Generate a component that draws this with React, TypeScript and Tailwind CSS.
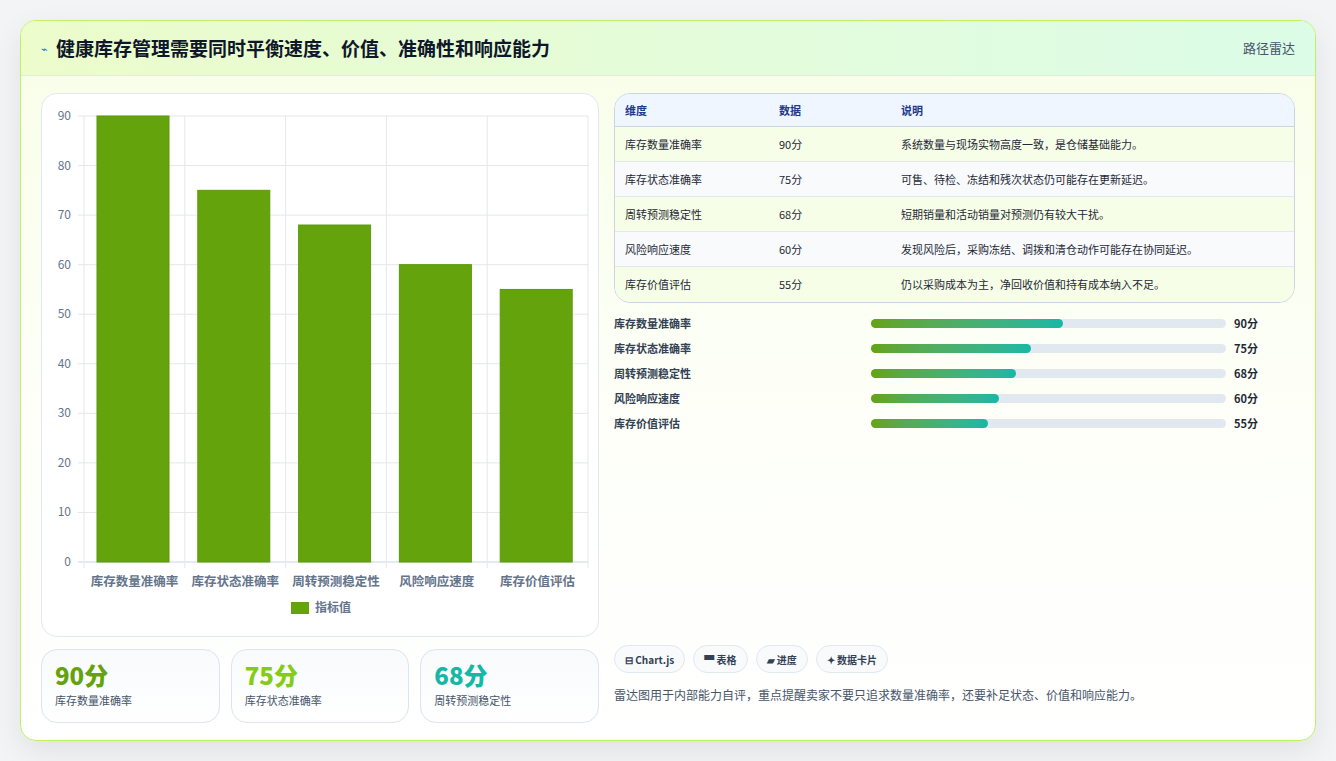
import React from "react";

const items = [
  { name: "库存数量准确率", value: 90, note: "系统数量与现场实物高度一致，是仓储基础能力。" },
  { name: "库存状态准确率", value: 75, note: "可售、待检、冻结和残次状态仍可能存在更新延迟。" },
  { name: "周转预测稳定性", value: 68, note: "短期销量和活动销量对预测仍有较大干扰。" },
  { name: "风险响应速度", value: 60, note: "发现风险后，采购冻结、调拨和清仓动作可能存在协同延迟。" },
  { name: "库存价值评估", value: 55, note: "仍以采购成本为主，净回收价值和持有成本纳入不足。" },
];

const font = { fontFamily: '"Noto Sans CJK SC", "Noto Sans", sans-serif' };

function BarChart() {
  const left = 42;
  const right = 546;
  const top = 22;
  const bottom = 468;
  const unit = (bottom - top) / 90;
  const cw = (right - left) / 5;
  return (
    <svg width="558" height="543" className="block" style={font}>
      {[0, 10, 20, 30, 40, 50, 60, 70, 80, 90].map((v) => {
        const y = bottom - v * unit;
        return (
          <g key={v}>
            <line x1={left - 6} x2={right} y1={y} y2={y} stroke={v === 0 ? "#cbd5e1" : "#e5e7eb"} />
            <text x={29} y={y + 4} textAnchor="end" fontSize="12" fill="#64748b">
              {v}
            </text>
          </g>
        );
      })}
      {[0, 1, 2, 3, 4, 5].map((i) => (
        <line key={i} x1={left + cw * i} x2={left + cw * i} y1={top} y2={bottom + 6} stroke="#e5e7eb" />
      ))}
      {items.map((it, i) => (
        <g key={it.name}>
          <rect x={left + cw * i + 13} y={bottom - it.value * unit} width={72} height={it.value * unit} fill="#65a30d" stroke="#5b9a0a" />
          <text x={left + cw * i + cw / 2} y={492} textAnchor="middle" fontSize="12.5" fontWeight="600" fill="#64748b">
            {it.name}
          </text>
        </g>
      ))}
      <rect x={249} y={508} width={18} height={12} fill="#65a30d" />
      <text x={273} y={518} fontSize="12" fontWeight="600" fill="#64748b">
        指标值
      </text>
    </svg>
  );
}

export default function App() {
  const statColors = ["text-[#65a30d]", "text-[#84cc16]", "text-[#14b8a6]"];
  return (
    <div className="min-h-screen bg-[#f3f4f6] pt-5 px-5" style={font}>
      <div className="h-[721px] w-[1296px] overflow-hidden rounded-2xl border border-[#bef264] bg-gradient-to-b from-[#f7fee7] via-[#fdfff7] to-white shadow-[0_10px_30px_rgba(0,0,0,0.08)]">
        <div className="flex h-[55px] items-center justify-between border-b border-[#e2ecd9] bg-gradient-to-r from-[#ecfccb] to-[#dcfce7] pl-5 pr-5">
          <div className="flex items-center gap-2">
            <span className="text-[11px] text-[#2563eb]">⌁</span>
            <h1 className="text-[19px] font-bold text-[#0f172a]">健康库存管理需要同时平衡速度、价值、准确性和响应能力</h1>
          </div>
          <span className="text-[13px] text-[#475569]">路径雷达</span>
        </div>
        <div className="flex gap-[15px] px-5 pt-[17px]">
          <div className="flex w-[558px] flex-col gap-3">
            <div className="h-[544px] rounded-2xl border border-[#e2e8f0] bg-white">
              <BarChart />
            </div>
            <div className="grid grid-cols-3 gap-[11px]">
              {items.slice(0, 3).map((it, i) => (
                <div key={it.name} className="h-[74px] rounded-2xl border border-[#dbe4f0] bg-gradient-to-b from-[#f8fafc] to-white px-[13px] pt-[10px]">
                  <div className={`text-[24px] font-extrabold leading-[30px] ${statColors[i]}`}>{it.value}分</div>
                  <div className="mt-[2px] text-[11px] text-[#475569]">{it.name}</div>
                </div>
              ))}
            </div>
          </div>
          <div className="flex w-[683px] flex-col">
            <div className="overflow-hidden rounded-2xl border border-[#cbd5e1] text-[11px]">
              <div className="flex h-[33px] items-center border-b border-[#cbd5e1] bg-[#eff6ff] font-bold text-[#1e3a8a]">
                <div className="w-[164px] pl-[10px]">维度</div>
                <div className="w-[122px]">数据</div>
                <div>说明</div>
              </div>
              {items.map((it, i) => (
                <div key={it.name} className={`flex h-[35px] items-center text-[#1f2937] ${i < 4 ? "border-b border-[#e2e8f0]" : ""} ${i % 2 === 0 ? "bg-[#f7fee7]" : "bg-[#f8fafc]"}`}>
                  <div className="w-[164px] pl-[10px]">{it.name}</div>
                  <div className="w-[122px]">{it.value}分</div>
                  <div>{it.note}</div>
                </div>
              ))}
            </div>
            <div className="mt-[12px] flex flex-col gap-[9px]">
              {items.map((it) => (
                <div key={it.name} className="flex h-4 items-center text-[11px] font-semibold text-[#334155]">
                  <div className="w-[257px]">{it.name}</div>
                  <div className="h-[9px] w-[355px] rounded-full bg-[#e2e8f0]">
                    <div className="h-full rounded-full bg-gradient-to-r from-[#65a30d] to-[#14b8a6]" style={{ width: `${it.value * 0.6}%` }} />
                  </div>
                  <div className="ml-2 font-bold text-[#1f2937]">{it.value}分</div>
                </div>
              ))}
            </div>
            <div className="mt-auto pb-[19px]">
              <div className="flex gap-2">
                {["⊟ Chart.js", "▀ 表格", "▰ 进度", "✦ 数据卡片"].map((c) => (
                  <span key={c} className="flex h-[28px] items-center rounded-full border border-[#e2e8f0] bg-[#f8fafc] px-[10px] text-[10px] font-bold text-[#334155]">
                    {c}
                  </span>
                ))}
              </div>
              <p className="mt-[13px] text-[12px] text-[#475569]">雷达图用于内部能力自评，重点提醒卖家不要只追求数量准确率，还要补足状态、价值和响应能力。</p>
            </div>
          </div>
        </div>
      </div>
    </div>
  );
}
